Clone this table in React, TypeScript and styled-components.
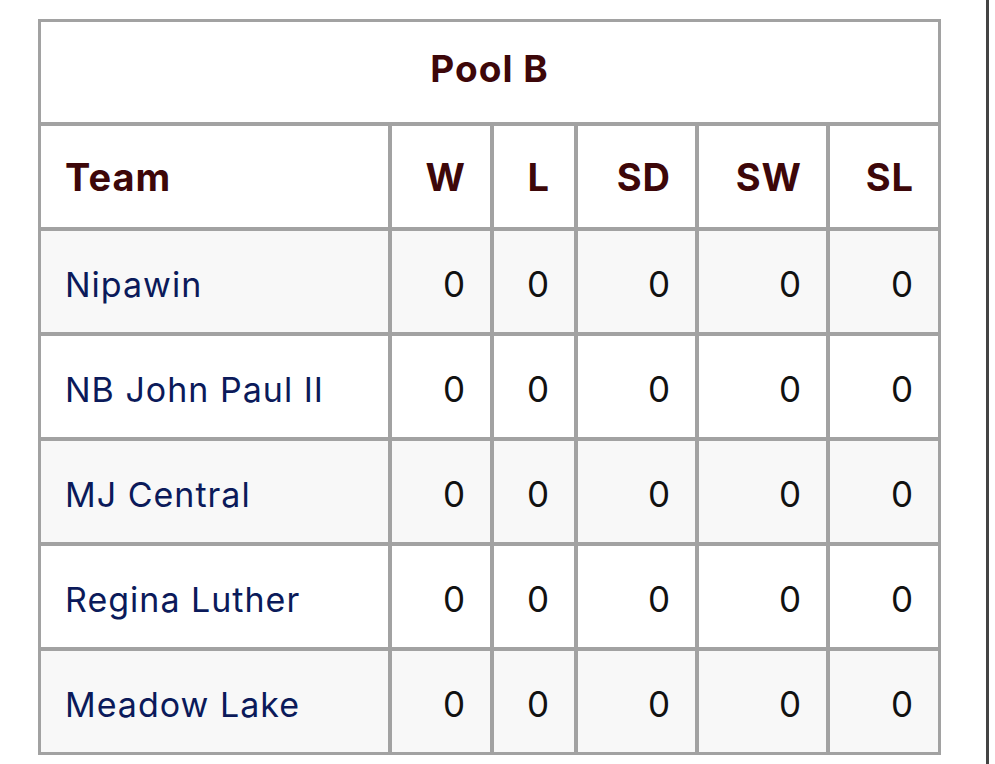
import styled, { createGlobalStyle } from 'styled-components';

const GlobalStyle = createGlobalStyle`
  html, body {
    margin: 0;
    padding: 0;
    background: #fff;
  }
  body {
    font-family: Inter, "Liberation Sans", sans-serif;
  }
`;

const Page = styled.div`
  box-sizing: border-box;
  width: 989px;
  height: 764px;
  padding: 19px 0 0 38px;
  border-right: 3px solid #444;
`;

const Table = styled.table`
  border-collapse: separate;
  border-spacing: 0;
  border: 3px solid #a2a2a2;
  width: 903px;
  table-layout: fixed;
  font-size: 34px;
  letter-spacing: 1px;
`;

const Caption = styled.th`
  height: 100px;
  padding: 0 0 8px;
  box-sizing: border-box;
  text-align: center;
  font-size: 37px;
  font-weight: 700;
  color: #3d0709;
`;

const HeadCell = styled.th<{ $left?: boolean }>`
  height: 101px;
  padding: 0 24px;
  border-top: 4px solid #a2a2a2;
  text-align: ${(p) => (p.$left ? 'left' : 'right')};
  font-size: 38px;
  font-weight: 700;
  color: #3d0709;

  & + & {
    border-left: 4px solid #a2a2a2;
  }
`;

const Row = styled.tr<{ $shade: boolean }>`
  background: ${(p) => (p.$shade ? '#f8f8f8' : '#fff')};
`;

const Cell = styled.td<{ $team?: boolean }>`
  box-sizing: border-box;
  height: 105px;
  padding: 5px 24px 0;
  border-top: 4px solid #a2a2a2;
  text-align: ${(p) => (p.$team ? 'left' : 'right')};
  color: ${(p) => (p.$team ? '#0b1a5a' : '#111')};
  font-size: ${(p) => (p.$team ? '34px' : '35px')};
  white-space: nowrap;

  & + & {
    border-left: 4px solid #a2a2a2;
  }
`;

const columns = [
  { key: 'W', width: 102 },
  { key: 'L', width: 84 },
  { key: 'SD', width: 121 },
  { key: 'SW', width: 131 },
  { key: 'SL', width: 112 },
];

const teams = ['Nipawin', 'NB John Paul II', 'MJ Central', 'Regina Luther', 'Meadow Lake'];

export default function App() {
  return (
    <>
      <GlobalStyle />
      <Page>
        <Table>
          <colgroup>
            <col style={{ width: 347 }} />
            {columns.map((c) => (
              <col key={c.key} style={{ width: c.width }} />
            ))}
          </colgroup>
          <thead>
            <tr>
              <Caption colSpan={6}>Pool B</Caption>
            </tr>
            <tr>
              <HeadCell $left>Team</HeadCell>
              {columns.map((c) => (
                <HeadCell key={c.key}>{c.key}</HeadCell>
              ))}
            </tr>
          </thead>
          <tbody>
            {teams.map((t, i) => (
              <Row key={t} $shade={i % 2 === 0}>
                <Cell $team>{t}</Cell>
                {columns.map((c) => (
                  <Cell key={c.key}>0</Cell>
                ))}
              </Row>
            ))}
          </tbody>
        </Table>
      </Page>
    </>
  );
}
